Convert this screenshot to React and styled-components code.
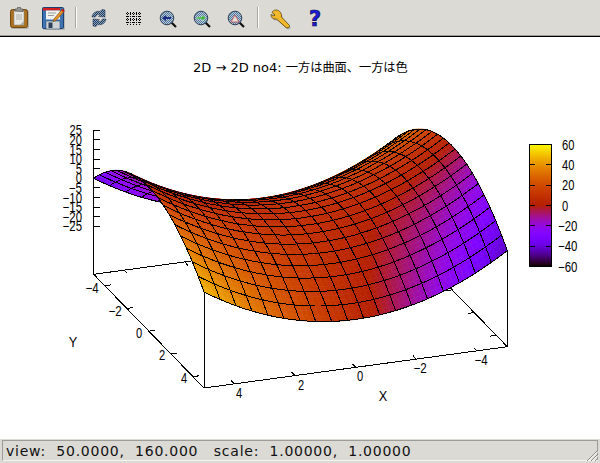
import React from 'react'
import styled, { createGlobalStyle } from 'styled-components'

const GlobalStyle = createGlobalStyle`
    html, body {
        margin: 0;
        padding: 0;
        background: #fff;
    }
`

const Window = styled.div`
    width: 600px;
    height: 463px;
    display: flex;
    flex-direction: column;
    overflow: hidden;
    background: #fff;
`

const Toolbar = styled.div`
    height: 36px;
    flex: none;
    display: flex;
    align-items: center;
    padding: 0 0 0 2px;
    box-sizing: border-box;
    background: #dcdad5;
    border-bottom: 1px solid #9d9c98;
`

const ToolButton = styled.div`
    width: 34px;
    height: 34px;
    display: flex;
    align-items: center;
    justify-content: center;
`

const Separator = styled.div`
    width: 2px;
    height: 21px;
    margin: 0 5px;
    background: linear-gradient(to right, #a8a6a1 50%, #fff 50%);
`

const CanvasEdge = styled.div`
    height: 1px;
    flex: none;
    background: #000;
`

const Plot = styled.svg`
    display: block;
    flex: 1;
    width: 600px;
    background: #fff;
    font-family: 'Liberation Sans', Arial, sans-serif;
`

const StatusBar = styled.div`
    height: 24px;
    flex: none;
    position: relative;
    box-sizing: border-box;
    padding: 1px 2px 2px;
    background: #dcdad5;
`

const StatusFrame = styled.div`
    height: 100%;
    box-sizing: border-box;
    padding-left: 3px;
    border-top: 1px solid #9d9c98;
    border-left: 1px solid #9d9c98;
    border-right: 1px solid #9d9c98;
    border-bottom: 1px solid #f4f3f0;
    font: 14px/20px 'DejaVu Sans', Verdana, sans-serif;
    letter-spacing: 0.75px;
    color: #111;
    white-space: pre;
`

const Grip = styled.svg`
    position: absolute;
    right: 1px;
    bottom: 1px;
`

// gnuplot view 50,160 boiled down to screen vectors
const F = [204, 388]
const EX = [-30.33, 4.13]
const EY = [11.03, 11.37]
const ZSCALE = 1.92
const ZBASE = -50
const STEPS = 19
const SUB = 3

const project = (x, y, z = ZBASE) => [
    F[0] + (x - 5) * EX[0] + (y - 5) * EY[0],
    F[1] + (x - 5) * EX[1] + (y - 5) * EY[1] - (z - ZBASE) * ZSCALE
]

const surfaceZ = (x, y) => x * x - y * y

const colorValue = (x, y) =>
    1.62 * x * y + 1.0 * x + 0.4 * y + 7 - 0.15 * (x * x + y * y) + (x < 0 && y < 0 ? 0.2 * x * y : 0)

const palette = (v) => {
    const t = Math.min(1, Math.max(0, (v + 60) / 120))
    const r = Math.round(255 * Math.sqrt(t))
    const g = Math.round(255 * t * t * t)
    const b = Math.round(255 * Math.max(0, Math.sin(2 * Math.PI * t)))
    return `rgb(${r},${g},${b})`
}

const pt = (x, y) => project(x, y, surfaceZ(x, y)).map((n) => n.toFixed(1)).join(',')

const buildCells = () => {
    const cells = []
    const size = 10 / STEPS
    const sub = size / SUB
    for (let j = 0; j < STEPS; j++) {
        for (let i = 0; i < STEPS; i++) {
            const x0 = -5 + i * size
            const y0 = -5 + j * size
            const patches = []
            for (let b = 0; b < SUB; b++) {
                for (let a = 0; a < SUB; a++) {
                    const x = x0 + a * sub
                    const y = y0 + b * sub
                    patches.push({
                        points: [pt(x, y), pt(x + sub, y), pt(x + sub, y + sub), pt(x, y + sub)].join(' '),
                        fill: palette(colorValue(x + sub / 2, y + sub / 2))
                    })
                }
            }
            const outline = []
            for (let k = 0; k <= SUB; k++) outline.push(pt(x0 + k * sub, y0))
            for (let k = 1; k <= SUB; k++) outline.push(pt(x0 + size, y0 + k * sub))
            for (let k = 1; k <= SUB; k++) outline.push(pt(x0 + size - k * sub, y0 + size))
            for (let k = 1; k < SUB; k++) outline.push(pt(x0, y0 + size - k * sub))
            cells.push({ id: `${i}-${j}`, patches, outline: outline.join(' ') })
        }
    }
    return cells
}

const CELLS = buildCells()

const Line = ({ from, to }) => (
    <line x1={from[0]} y1={from[1]} x2={to[0]} y2={to[1]} stroke="#000" shapeRendering="crispEdges" />
)

const Label = ({ x, y, children, anchor = 'middle', wide = false }) => {
    const text = String(children)
    const glyphs = text.replace('−', '').length
    const width = (wide ? 8.5 : glyphs * 6.2) + (text.includes('−') ? 7 : 0)
    return (
        <text
            x={x}
            y={y + 5}
            fontSize="14"
            fill="#000"
            textAnchor={anchor}
            textLength={width}
            lengthAdjust="spacingAndGlyphs"
        >
            {text}
        </text>
    )
}

const Frame = () => {
    const L = project(5, -5)
    const B = project(-5, -5)
    const R = project(-5, 5)
    const ticks = [-4, -2, 0, 2, 4]
    const zTicks = [25, 20, 15, 10, 5, 0, -5, -10, -15, -20, -25]
    return (
        <g>
            <Line from={L} to={project(5, 5)} />
            <Line from={project(5, 5)} to={R} />
            <Line from={R} to={B} />
            <Line from={B} to={L} />
            <Line from={L} to={project(5, -5, 25)} />
            <Line from={project(5, 5)} to={project(5, 5, 0)} />
            <Line from={R} to={project(-5, 5, 0)} />
            {ticks.map((t) => (
                <g key={t}>
                    <Line from={project(t, 5)} to={project(t, 4.7)} />
                    <Line from={project(t, -5)} to={project(t, -4.7)} />
                    <Line from={project(5, t)} to={project(4.8, t)} />
                    <Line from={project(-5, t)} to={project(-4.8, t)} />
                </g>
            ))}
            {zTicks.map((v) => {
                const p = project(5, -5, v)
                return (
                    <g key={v}>
                        <Line from={p} to={[p[0] + 6, p[1]]} />
                        <Label x={82} y={p[1]} anchor="end">
                            {String(v).replace('-', '−')}
                        </Label>
                    </g>
                )
            })}
            <Label x={239} y={393}>4</Label>
            <Label x={301} y={385}>2</Label>
            <Label x={360} y={376}>0</Label>
            <Label x={420} y={368}>−2</Label>
            <Label x={481} y={360}>−4</Label>
            <Label x={92} y={288}>−4</Label>
            <Label x={115} y={311}>−2</Label>
            <Label x={139} y={333}>0</Label>
            <Label x={162} y={355}>2</Label>
            <Label x={184} y={378}>4</Label>
            <Label x={383} y={396} wide>X</Label>
            <Label x={73} y={342} wide>Y</Label>
        </g>
    )
}

const Surface = () => (
    <g>
        {CELLS.map((cell) => (
            <g key={cell.id}>
                {cell.patches.map((patch, i) => (
                    <polygon key={i} points={patch.points} fill={patch.fill} stroke={patch.fill} strokeWidth="0.6" />
                ))}
                <polygon points={cell.outline} fill="none" stroke="#000" shapeRendering="crispEdges" />
            </g>
        ))}
    </g>
)

const BAR_TOP = 144
const BAR_BOTTOM = 266

const ColorBar = () => {
    const rows = []
    for (let y = BAR_TOP; y < BAR_BOTTOM; y++) {
        rows.push(y)
    }
    const labels = [60, 40, 20, 0, -20, -40, -60]
    return (
        <g>
            {rows.map((y) => (
                <rect
                    key={y}
                    x="529"
                    y={y}
                    width="23"
                    height="1"
                    fill={palette(60 - ((y - BAR_TOP + 0.5) / (BAR_BOTTOM - BAR_TOP)) * 120)}
                />
            ))}
            <rect x="529.5" y="144.5" width="22" height="122" fill="none" stroke="#000" shapeRendering="crispEdges" />
            {labels.map((v) => {
                const y = BAR_TOP + ((60 - v) / 120) * 122 + 0.5
                return (
                    <g key={v}>
                        <Line from={[529, y]} to={[535, y]} />
                        <Line from={[546, y]} to={[552, y]} />
                        <Label x={v < 0 ? 558 : 562} y={y} anchor="start">
                            {String(v).replace('-', '−')}
                        </Label>
                    </g>
                )
            })}
        </g>
    )
}

const Title = () => (
    <text x="193" y="72" fontFamily="'DejaVu Sans', sans-serif" fontSize="13" fill="#000">
        2D → 2D no4:{' '}
        <tspan fontFamily="'Noto Sans CJK JP', sans-serif" fontSize="12.2">
            一方は曲面、一方は色
        </tspan>
    </text>
)

const Dither = ({ id, a, b }) => (
    <pattern id={id} width="2" height="2" patternUnits="userSpaceOnUse">
        <rect width="2" height="2" fill={a} />
        <rect width="1" height="1" fill={b} />
        <rect x="1" y="1" width="1" height="1" fill={b} />
    </pattern>
)

const ClipboardIcon = () => (
    <svg width="24" height="24" viewBox="0 0 24 24">
        <rect x="4" y="4" width="18" height="19" rx="2" fill="#00000030" />
        <rect x="3.5" y="3.5" width="17" height="18" rx="2" fill="#ab7020" stroke="#6e4a12" />
        <path d="M7 5h10v14h-4l-6 0z" fill="#e6e6e2" stroke="#8a8a86" strokeWidth="0.5" />
        <path d="M9 9h6M9 11h6M9 13h6" stroke="#b0b0ac" />
        <path d="M13 19l4-4v4z" fill="#a9a9a5" />
        <path d="M8 5V3h2.5V1.5h3V3H16v2.500z" fill="#9a9a96" stroke="#555" strokeWidth="0.7" />
    </svg>
)

const SaveIcon = () => (
    <svg width="24" height="24" viewBox="0 0 24 24">
        <rect x="2" y="2" width="22" height="22" rx="1" fill="#00000028" />
        <rect x="1.5" y="1.500" width="21" height="21" rx="1" fill="#3f74b2" stroke="#1d3f70" />
        <rect x="2" y="2" width="17" height="2.500" fill="#d42020" />
        <rect x="5" y="4.500" width="14" height="9" fill="#f2f2ee" />
        <path d="M7 7h8M7 9.500h6" stroke="#9a9a96" />
        <rect x="5" y="15" width="14" height="8" fill="#cfd3d6" stroke="#30507c" strokeWidth="0.6" />
        <rect x="7.500" y="16.500" width="4" height="5.500" fill="#2e3f58" />
        <path d="M13 13l8-9.500 2 2-8 9-2.800 1z" fill="#e8952a" stroke="#7a4a10" strokeWidth="0.7" />
        <path d="M21 3.500l2 2" stroke="#c81e1e" strokeWidth="2" />
    </svg>
)

const RefreshIcon = () => (
    <svg width="24" height="24" viewBox="0 0 24 24">
        <defs>
            <Dither id="refresh-fill" a="#1f3a5c" b="#8ba4bf" />
        </defs>
        <path
            d="M5 11c.5-4 4-6.500 8-5.500l2-2 3 .5v7l-6.500-.5 2-2c-2.500-.5-4 .5-5 2.500z"
            fill="url(#refresh-fill)"
            stroke="#1c2f48"
            strokeWidth="0.5"
        />
        <path
            d="M19 13c-.5 4-4 6.500-8 5.500l-2 2-3-.5v-7l6.500.5-2 2c2.500.5 4-.5 5-2.500z"
            fill="url(#refresh-fill)"
            stroke="#1c2f48"
            strokeWidth="0.5"
        />
    </svg>
)

const GridIcon = () => (
    <svg width="24" height="24" viewBox="0 0 24 24" shapeRendering="crispEdges">
        <path
            d="M6.500 6v13M9.500 6v13M12.500 6v13M15.500 6v13M18.500 6v13"
            stroke="#000"
            strokeDasharray="1 1"
        />
        <path
            d="M5 7.500h15M5 10.500h15M5 13.500h15M5 16.500h15"
            stroke="#000"
            strokeDasharray="1 1"
        />
    </svg>
)

const ZoomIcon = ({ id, children }) => (
    <svg width="24" height="24" viewBox="0 0 24 24">
        <defs>
            <Dither id={id} a="#4f769d" b="#bccbd9" />
        </defs>
        <path d="M16 16l5 5" stroke="#111" strokeWidth="2.200" />
        <circle cx="12" cy="12" r="6.800" fill={`url(#${id})`} stroke="#2c3f55" />
        {children}
    </svg>
)

const WrenchIcon = () => (
    <svg width="24" height="24" viewBox="0 0 24 24">
        <path
            d="M7 4c-2 0-3.500 1-4 2.500l3 2.500-1 1-3-1.500c0 3 2 5 5.500 4.500L17 21.500c1 1 4 0 3.500-2l-8-8.500c.5-3-1.500-7-5.500-7z"
            transform="translate(1 1.500)"
            fill="#00000038"
        />
        <path
            d="M7 4c-2 0-3.500 1-4 2.500l3 2.500-1 1-3-1.500c0 3 2 5 5.500 4.500L17 21.500c1 1 4 0 3.500-2l-8-8.500c.5-3-1.500-7-5.500-7z"
            fill="#f2b82c"
            stroke="#5a4208"
            strokeWidth="0.8"
        />
    </svg>
)

const HelpIcon = () => (
    <svg width="24" height="24" viewBox="0 0 24 24">
        <text
            x="12"
            y="20"
            textAnchor="middle"
            fontFamily="'DejaVu Sans', sans-serif"
            fontWeight="bold"
            fontSize="21"
            fill="#1e1ed8"
            stroke="#0a0a50"
            strokeWidth="0.7"
        >
            ?
        </text>
    </svg>
)

const App = () => {
    return (
        <Window>
            <GlobalStyle />
            <Toolbar>
                <ToolButton><ClipboardIcon /></ToolButton>
                <ToolButton><SaveIcon /></ToolButton>
                <Separator />
                <ToolButton><RefreshIcon /></ToolButton>
                <ToolButton><GridIcon /></ToolButton>
                <ToolButton>
                    <ZoomIcon id="zoom-prev">
                        <path d="M7 12l4-3v2h5v2h-5v2z" fill="#1c2c80" />
                    </ZoomIcon>
                </ToolButton>
                <ToolButton>
                    <ZoomIcon id="zoom-next">
                        <path d="M17 12l-4-3v2H8v2h5v2z" fill="#3cb43c" stroke="#e4f2e4" strokeWidth="0.4" />
                    </ZoomIcon>
                </ToolButton>
                <ToolButton>
                    <ZoomIcon id="zoom-auto">
                        <path d="M8 16l4-7 4 7z" fill="#e6dcd8" stroke="#c04a4a" strokeWidth="0.8" />
                    </ZoomIcon>
                </ToolButton>
                <Separator />
                <ToolButton><WrenchIcon /></ToolButton>
                <ToolButton><HelpIcon /></ToolButton>
            </Toolbar>
            <CanvasEdge />
            <Plot viewBox="0 37 600 402">
                <Title />
                <Frame />
                <Surface />
                <ColorBar />
            </Plot>
            <StatusBar>
                <StatusFrame>{'view:  50.0000,  160.000   scale:  1.00000,  1.00000'}</StatusFrame>
                <Grip width="15" height="15" viewBox="0 0 15 15">
                    <path d="M14 3L3 14M14 7L7 14M14 11l-3 3" stroke="#8f8e8a" />
                    <path d="M14 4.500L4.500 14M14 8.500L8.500 14M14 12.500l-1.500 1.500" stroke="#fff" />
                </Grip>
            </StatusBar>
        </Window>
    )
}

export default App
